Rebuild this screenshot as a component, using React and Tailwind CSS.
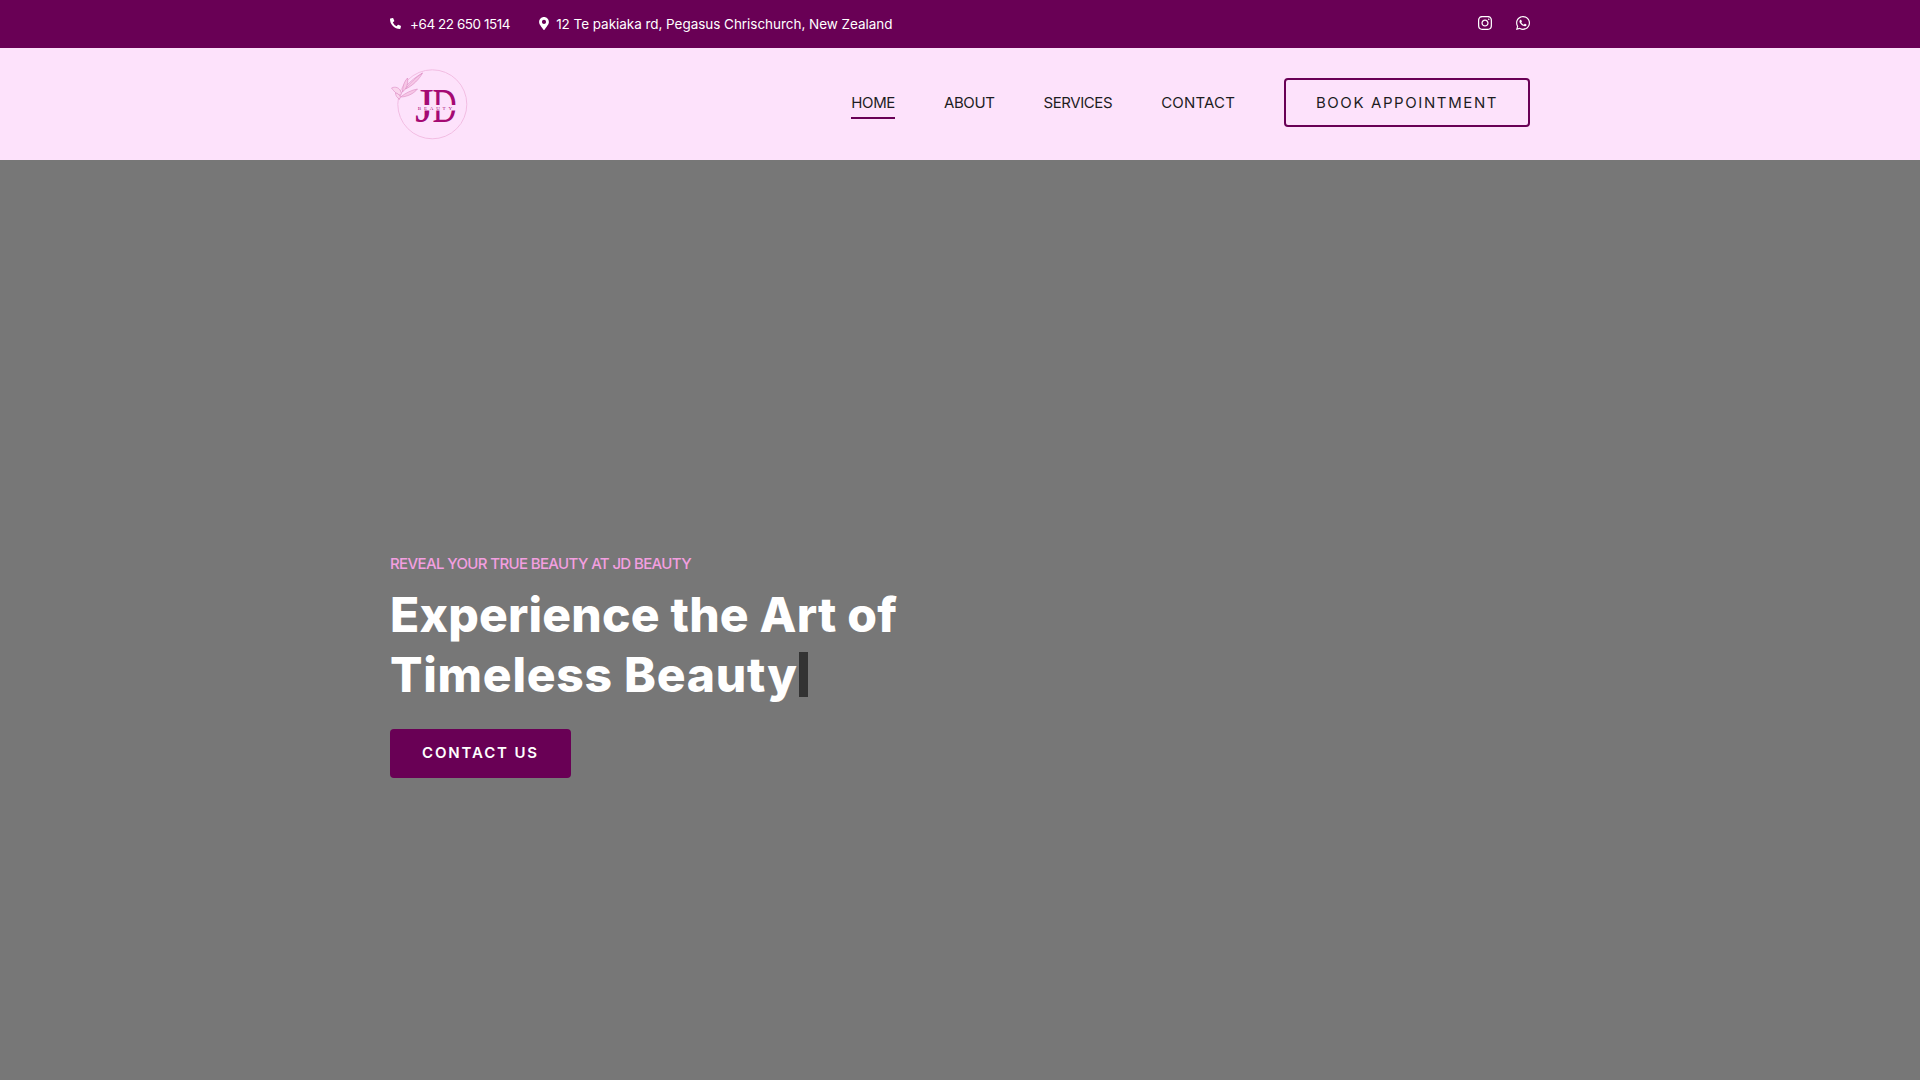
import React from "react";
import { FaPhoneAlt, FaMapMarkerAlt, FaInstagram, FaWhatsapp } from "react-icons/fa";

function Logo() {
  return (
    <svg width="80" height="72" viewBox="0 0 80 72" className="block">
      <circle cx="42.3" cy="36.3" r="34.5" fill="none" stroke="#efb4dc" strokeWidth="0.8" />
      <g fill="none" stroke="#d272b2" strokeWidth="0.45" transform="translate(2.5 0)">
        <path d="M6.5 32 C8 23 16 13 30 5" />
        <path d="M13 21 C18 14 24 9 30 5 C27 11 20 18 13 21Z" fill="#f6c6e6" />
        <path d="M10 24 C10 18 12 13 15 10 C16 15 14 21 10 24Z" fill="#f6c6e6" />
        <path d="M8 29 C13 25 19 22 25 21 C21 26 14 29 8 29Z" fill="#f6c6e6" />
        <path d="M8 27 C5 27 2 24 -1 20 C3 18 7 20 8 23 C9 25 9 26 8 27Z" fill="#fad5ee" />
        <path d="M7 31 C5 30 3 28 3 25 C5 25 7 27 8 29Z" fill="#fad5ee" />
      </g>
      <text x="25" y="54" fontFamily="'Liberation Serif', serif" fontSize="48" fill="#a50a73">J</text>
      <text transform="translate(42.5 54) scale(0.7 1)" fontFamily="'Liberation Serif', serif" fontSize="48" fill="#a50a73">D</text>
      <rect x="25" y="37" width="43" height="5.5" fill="#fde2fb" />
      <text x="46.3" y="42" textAnchor="middle" fontFamily="'Liberation Serif', serif" fontSize="5" fill="#a50a73" letterSpacing="2.8">BEAUTY</text>
    </svg>
  );
}

export default function App() {
  const sans = "font-['Inter','Noto_Sans',sans-serif]";
  return (
    <div className={`min-h-[1080px] h-screen flex flex-col bg-[#777777] ${sans}`}>
      <div className="h-12 shrink-0 bg-[#690055] text-white">
        <div className="w-[1140px] h-full mx-auto flex items-center justify-between">
          <div className="flex items-center text-[13.5px]">
            <FaPhoneAlt className="w-[11px] h-[11px] mr-[9px] -mt-[2px]" />
            <span className="tracking-[-0.45px]">+64 22 650 1514</span>
            <FaMapMarkerAlt className="w-[10px] h-[13px] ml-[29px] mr-[7px] -mt-[2px]" />
            <span className="tracking-[-0.04px]">12 Te pakiaka rd, Pegasus Chrischurch, New Zealand</span>
          </div>
          <div className="flex items-center gap-[22px] -mt-[2px] -mr-px">
            <FaInstagram className="w-[16px] h-[16px]" />
            <FaWhatsapp className="w-[16px] h-[16px]" />
          </div>
        </div>
      </div>
      <div className="h-[112px] shrink-0 bg-[#fde2fb]">
        <div className="w-[1140px] h-full mx-auto flex items-center justify-between">
          <Logo />
          <div className="flex items-center text-[#1d1d1f] text-[15px] leading-[24px] pb-[3px]">
            <div className="flex items-center gap-[49px] mr-[49px]">
              <a className="border-b-2 border-[#690055] pt-[5px] pb-[2px] tracking-[-0.37px]">HOME</a>
              <a className="border-b-2 border-transparent pt-[5px] pb-[2px] tracking-[-0.4px]">ABOUT</a>
              <a className="border-b-2 border-transparent pt-[5px] pb-[2px] tracking-[-0.42px]">SERVICES</a>
              <a className="border-b-2 border-transparent pt-[5px] pb-[2px] tracking-[0.18px]">CONTACT</a>
            </div>
            <button className="w-[246px] h-[49px] rounded-[4px] border-2 border-[#690055] text-[15px] font-normal tracking-[1.6px]">
              BOOK APPOINTMENT
            </button>
          </div>
        </div>
      </div>
      <div className="flex-1">
        <div className="w-[1140px] mx-auto pt-[392px]">
          <div className="text-[15px] leading-[24px] font-medium tracking-[-0.63px] text-[#f39fe0]">
            REVEAL YOUR TRUE BEAUTY AT JD BEAUTY
          </div>
          <h1 className="mt-[9px] text-[48px] leading-[60px] font-extrabold text-white">
            <span className="tracking-[0.19px]">Experience the Art of</span>
            <br />
            <span className="tracking-[0.75px]">Timeless Beauty</span><span className="inline-block align-[-5px] w-[9px] h-[45px] bg-[#333333] ml-[1px]"></span>
          </h1>
          <button className="mt-[24px] block w-[181px] h-[49px] rounded-[4px] bg-[#690055] text-white text-[15px] font-semibold tracking-[1.85px]">
            CONTACT US
          </button>
        </div>
      </div>
    </div>
  );
}
